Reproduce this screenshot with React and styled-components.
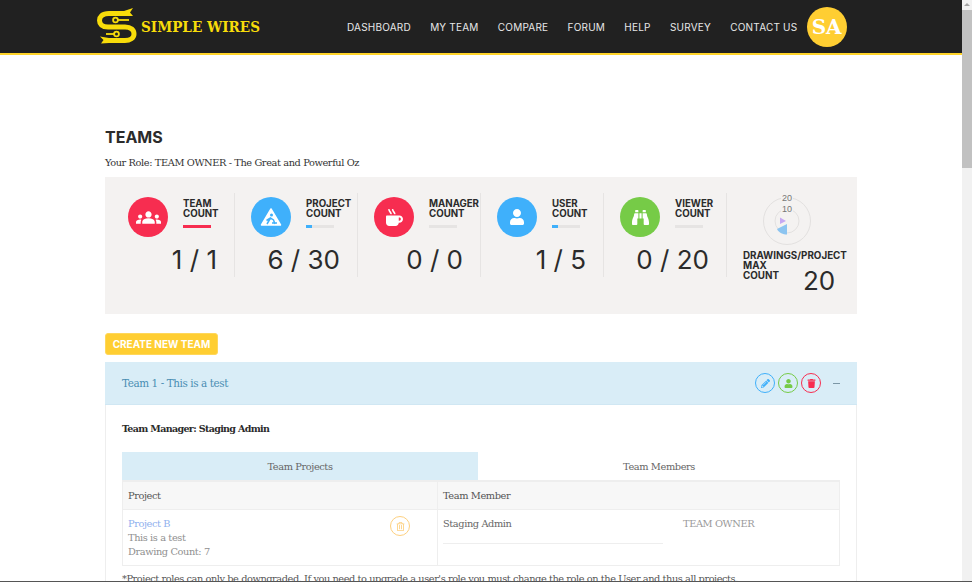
// App.jsx
import React from 'react';
import styled, { createGlobalStyle } from 'styled-components';
import { MdGroups } from 'react-icons/md';
import { FaMugHot, FaUser, FaBinoculars, FaPencilAlt, FaTrash, FaRegTrashAlt } from 'react-icons/fa';

const RED = '#f72d50';
const BLUE = '#3fb0fb';
const GREEN = '#76cb47';

const stats = [
  { label: 'TEAM', value: '1 / 1', color: RED, fill: 100, icon: <MdGroups size={25} /> },
  { label: 'PROJECT', value: '6 / 30', color: BLUE, fill: 20, icon: <DiggerSign /> },
  { label: 'MANAGER', value: '0 / 0', color: RED, fill: 0, icon: <FaMugHot size={17} /> },
  { label: 'USER', value: '1 / 5', color: BLUE, fill: 20, icon: <FaUser size={16} /> },
  { label: 'VIEWER', value: '0 / 20', color: GREEN, fill: 0, icon: <FaBinoculars size={17} /> },
];

const navItems = ['DASHBOARD', 'MY TEAM', 'COMPARE', 'FORUM', 'HELP', 'SURVEY', 'CONTACT US'];

function DiggerSign() {
  return (
    <svg width="22" height="20" viewBox="0 0 22 20">
      <path d="M11 2 L20.5 18 H1.5 Z" fill="#fff" stroke="#fff" strokeWidth="1.5" strokeLinejoin="round" />
      <circle cx="11.5" cy="8" r="1.5" fill={BLUE} />
      <path d="M7 17 L10.5 11 L13.5 13 L15 17 M10.5 11 L6.5 13.5 M12 16 h5" fill="none" stroke={BLUE} strokeWidth="1.5" />
    </svg>
  );
}

function Logo() {
  return (
    <svg width="40" height="37" viewBox="0 0 40 37">
      <g fill="none" stroke="#f8dc0a" strokeLinejoin="round">
        <path strokeWidth="5" d="M30 6.5 H12 C5 6.5 2.5 10 2.5 13.5 C2.5 17 5 20 11 20 H28 C34 20 37 23 37 27 C37 31 33 33.5 28 33.5 H10" />
        <path strokeWidth="1.8" d="M21 13 H32" />
        <path strokeWidth="1.8" d="M17 27 H9" />
        <circle cx="18.5" cy="13" r="2.4" strokeWidth="1.8" />
        <circle cx="19.5" cy="27" r="2.4" strokeWidth="1.8" />
      </g>
      <path d="M27 4 L36 1 L33 5.5 L36 9 L27 9 Z" fill="#f8dc0a" />
      <path d="M12 31 L3 29.5 L6.5 33 L4 36.5 L12 36 Z" fill="#f8dc0a" />
    </svg>
  );
}

function Radar() {
  return (
    <svg width="60" height="60" viewBox="0 0 60 60">
      <circle cx="30" cy="30" r="23.5" fill="none" stroke="#e3e1e0" strokeWidth="1" />
      <circle cx="30" cy="30" r="12" fill="none" stroke="#e3e1e0" strokeWidth="1" />
      <path d="M23 26.5 L29 30 L23 33 Z" fill="#c6a8f2" />
      <path d="M30 33 L20 38 C22 42 26 43.5 30 43.5 Z" fill="#8cc4f0" />
      <RadarTick x={30} y={7} value="20" />
      <RadarTick x={30} y={18} value="10" />
    </svg>
  );
}

function RadarTick({ x, y, value }) {
  return (
    <>
      <rect x={x - 6} y={y - 5} width="12" height="9.5" fill="#f4f2f1" />
      <text x={x} y={y + 3} textAnchor="middle" fontSize="9" letterSpacing="0" fontFamily="Liberation Sans, sans-serif" fill="#777">
        {value}
      </text>
    </>
  );
}

export default function App() {
  return (
    <>
      <GlobalStyle />
      <Viewport>
        <Page>
          <Header>
            <Brand>
              <Logo />
              <BrandName>SIMPLE WIRES</BrandName>
            </Brand>
            <Nav>
              {navItems.map((item) => (
                <NavLink key={item}>{item}</NavLink>
              ))}
              <Avatar>SA</Avatar>
            </Nav>
          </Header>
          <Main>
            <Title>TEAMS</Title>
            <Role>Your Role: TEAM OWNER - The Great and Powerful Oz</Role>
            <StatsPanel>
              {stats.map((s) => (
                <StatCell key={s.label}>
                  <StatTop>
                    <IconCircle $color={s.color}>{s.icon}</IconCircle>
                    <div>
                      <StatLabel>
                        {s.label}
                        <br />
                        COUNT
                      </StatLabel>
                      <Bar>
                        <BarFill $color={s.color} style={{ width: `${s.fill}%` }} />
                      </Bar>
                    </div>
                  </StatTop>
                  <StatValue>{s.value}</StatValue>
                </StatCell>
              ))}
              <LastCell>
                <RadarWrap>
                  <Radar />
                </RadarWrap>
                <LastRow>
                  <LastLabel>
                    DRAWINGS/PROJECT
                    <br />
                    MAX
                    <br />
                    COUNT
                  </LastLabel>
                  <LastValue>20</LastValue>
                </LastRow>
              </LastCell>
            </StatsPanel>
            <CreateButton>CREATE NEW TEAM</CreateButton>
            <Card>
              <CardHead>
                <CardTitle>Team 1 - This is a test</CardTitle>
                <CardActions>
                  <RoundButton $color={BLUE}>
                    <FaPencilAlt size={9} />
                  </RoundButton>
                  <RoundButton $color={GREEN}>
                    <FaUser size={9} />
                  </RoundButton>
                  <RoundButton $color={RED}>
                    <FaTrash size={9} />
                  </RoundButton>
                  <Collapse />
                </CardActions>
              </CardHead>
              <CardBody>
                <Manager>Team Manager: Staging Admin</Manager>
                <Tabs>
                  <Tab $active>Team Projects</Tab>
                  <Tab>Team Members</Tab>
                </Tabs>
                <Table>
                  <HeadCell>Project</HeadCell>
                  <HeadCell>Team Member</HeadCell>
                  <ProjectCell>
                    <ProjectInfo>
                      <ProjectLink>Project B</ProjectLink>
                      <Muted>This is a test</Muted>
                      <Muted>Drawing Count: 7</Muted>
                    </ProjectInfo>
                    <RoundButton $color="#fdb83c" $faint>
                      <FaRegTrashAlt size={9} />
                    </RoundButton>
                  </ProjectCell>
                  <MemberCell>
                    <MemberName>Staging Admin</MemberName>
                    <MemberRole>TEAM OWNER</MemberRole>
                  </MemberCell>
                </Table>
                <Note>*Project roles can only be downgraded. If you need to upgrade a user's role you must change the role on the User and thus all projects.</Note>
              </CardBody>
            </Card>
          </Main>
        </Page>
        <ScrollTrack>
          <ScrollArrow />
          <ScrollThumb />
        </ScrollTrack>
      </Viewport>
    </>
  );
}

const GlobalStyle = createGlobalStyle`
  html, body {
    margin: 0;
    height: 100%;
    overflow: hidden;
    background: #fff;
  }
  * { box-sizing: border-box; }
`;

const Viewport = styled.div`
  display: flex;
  width: 972px;
  height: 582px;
  overflow: hidden;
  border-bottom: 1px solid #555;
`;

const Page = styled.div`
  width: 962px;
  flex: none;
  overflow: hidden;
  font-family: 'DejaVu Serif', serif;
  font-size: 9.8px;
  color: #333;
`;

const ScrollTrack = styled.div`
  width: 10px;
  flex: none;
  background: #f1f1f1;
`;

const ScrollArrow = styled.div`
  width: 0;
  height: 0;
  margin: 3px auto 4px;
  border-left: 3px solid transparent;
  border-right: 3px solid transparent;
  border-bottom: 3px solid #a3a3a3;
`;

const ScrollThumb = styled.div`
  height: 158px;
  background: #c1c1c1;
`;

const Header = styled.header`
  height: 55px;
  background: #212121;
  border-bottom: 2px solid #ffd42a;
  display: flex;
  align-items: flex-start;
  padding: 7px 0 0 97px;
`;

const Brand = styled.div`
  display: flex;
  align-items: center;
  gap: 4px;
  height: 37px;
`;

const BrandName = styled.div`
  font-family: 'DejaVu Serif', serif;
  font-weight: 700;
  font-size: 15.5px;
  color: #f8dc0a;
  transform: scaleX(0.875);
  transform-origin: left center;
  white-space: nowrap;
  width: 200px;
  margin-top: 2px;
`;

const Nav = styled.nav`
  display: flex;
  align-items: center;
  gap: 19.3px;
  margin-left: 6px;
  height: 40px;
`;

const NavLink = styled.a`
  font-family: Inter, sans-serif;
  font-size: 10px;
  letter-spacing: 0.2px;
  color: #e8e8e8;
  white-space: nowrap;
`;

const Avatar = styled.div`
  width: 40px;
  height: 40px;
  margin-left: -10px;
  border-radius: 50%;
  background: #ffce32;
  color: #fff;
  display: flex;
  align-items: center;
  justify-content: center;
  font-family: 'DejaVu Serif', serif;
  font-weight: 700;
  font-size: 20px;
`;

const Main = styled.main`
  width: 752px;
  margin-left: 105px;
  padding-top: 72px;
  letter-spacing: -0.4px;
`;

const Title = styled.h1`
  margin: 0;
  font-family: Inter, sans-serif;
  font-weight: 700;
  font-size: 16px;
  line-height: 20px;
  letter-spacing: normal;
  color: #2b2b2b;
`;

const Role = styled.p`
  margin: 8px 0 0;
  line-height: 15px;
  color: #333;
`;

const StatsPanel = styled.section`
  display: flex;
  height: 137px;
  margin-top: 7px;
  padding: 16px 0 0 7px;
  background: #f4f2f1;
`;

const StatCell = styled.div`
  width: 123px;
  height: 84px;
  flex: none;
  padding: 4px 17px 0 16px;
  border-right: 1px solid #e6e4e3;
`;

const StatTop = styled.div`
  display: flex;
  gap: 15px;
`;

const IconCircle = styled.div`
  width: 40px;
  height: 40px;
  flex: none;
  border-radius: 50%;
  background: ${(p) => p.$color};
  color: #fff;
  display: flex;
  align-items: center;
  justify-content: center;
`;

const StatLabel = styled.div`
  margin-top: 2px;
  font-family: Inter, sans-serif;
  font-weight: 700;
  font-size: 9.7px;
  line-height: 10px;
  letter-spacing: normal;
  color: #2b2b2b;
  white-space: nowrap;
`;

const Bar = styled.div`
  width: 28px;
  height: 3px;
  margin-top: 6px;
  background: #e6e4e3;
`;

const BarFill = styled.div`
  height: 100%;
  background: ${(p) => p.$color};
`;

const StatValue = styled.div`
  margin-top: 8px;
  text-align: right;
  font-family: Inter, sans-serif;
  font-size: 26px;
  line-height: 30px;
  letter-spacing: normal;
  color: #2b2b2b;
  white-space: nowrap;
`;

const LastCell = styled.div`
  flex: 1;
  padding-left: 16px;
  min-width: 0;
`;

const RadarWrap = styled.div`
  margin: -2px 0 0 14px;
  height: 60px;
`;

const LastRow = styled.div`
  display: flex;
`;

const LastLabel = styled.div`
  font-family: Inter, sans-serif;
  font-weight: 700;
  font-size: 9.8px;
  line-height: 10px;
  letter-spacing: normal;
  color: #2b2b2b;
  white-space: nowrap;
  width: 60px;
`;

const LastValue = styled.div`
  margin-top: 16px;
  font-family: Inter, sans-serif;
  font-size: 26px;
  line-height: 28px;
  letter-spacing: normal;
  color: #2b2b2b;
`;

const CreateButton = styled.button`
  display: block;
  width: 113px;
  height: 22px;
  margin-top: 19px;
  padding: 0;
  border: 1px solid #ffd75a;
  border-radius: 3px;
  background: #ffce32;
  color: #fff;
  font-family: Inter, sans-serif;
  font-weight: 700;
  font-size: 10px;
`;

const Card = styled.section`
  margin-top: 7px;
  border-left: 1px solid #eee;
  border-right: 1px solid #eee;
`;

const CardHead = styled.div`
  height: 43px;
  margin: 0 -1px;
  padding: 0 17px;
  display: flex;
  align-items: center;
  justify-content: space-between;
  background: #d9edf7;
  border-bottom: 1px solid #d0e7f3;
`;

const CardTitle = styled.div`
  font-size: 10.4px;
  color: #4a8db3;
`;

const CardActions = styled.div`
  display: flex;
  align-items: center;
  gap: 3px;
`;

const RoundButton = styled.div`
  width: 20px;
  height: 20px;
  flex: none;
  border-radius: 50%;
  border: 1px solid ${(p) => p.$color};
  color: ${(p) => p.$color};
  opacity: ${(p) => (p.$faint ? 0.65 : 1)};
  display: flex;
  align-items: center;
  justify-content: center;
`;

const Collapse = styled.div`
  width: 7px;
  height: 1px;
  margin: 0 0 0 9px;
  background: #7c97a6;
`;

const CardBody = styled.div`
  padding: 0 16px;
`;

const Manager = styled.div`
  padding-top: 17px;
  font-size: 9.5px;
  font-weight: 700;
  line-height: 14px;
  letter-spacing: -0.65px;
  color: #2b2b2b;
`;

const Tabs = styled.div`
  display: grid;
  grid-template-columns: 356px 1fr;
  margin-top: 16px;
`;

const Tab = styled.div`
  height: 28px;
  display: flex;
  align-items: center;
  justify-content: center;
  color: #666;
  background: ${(p) => (p.$active ? '#d9edf7' : '#fff')};
`;

const Table = styled.div`
  display: grid;
  grid-template-columns: 315px 1fr;
  border: 1px solid #eee;
  border-top-width: 2px;
`;

const HeadCell = styled.div`
  height: 28px;
  padding: 0 5px;
  display: flex;
  align-items: center;
  color: #555;
  background: #f7f7f7;
  border-bottom: 1px solid #eee;
  &:first-child {
    border-right: 1px solid #eee;
  }
`;

const ProjectCell = styled.div`
  height: 55px;
  padding: 6px 27px 0 5px;
  display: flex;
  justify-content: space-between;
  border-right: 1px solid #eee;
`;

const ProjectInfo = styled.div`
  padding-top: 1px;
`;

const ProjectLink = styled.div`
  line-height: 14px;
  color: #8fb0ee;
`;

const Muted = styled.div`
  line-height: 14px;
  color: #8f8f8f;
`;

const MemberCell = styled.div`
  display: flex;
  padding: 7px 0 0 5px;
`;

const MemberName = styled.div`
  width: 220px;
  height: 27px;
  line-height: 14px;
  color: #666;
  border-bottom: 1px solid #eee;
`;

const MemberRole = styled.div`
  margin-left: 20px;
  line-height: 14px;
  color: #999;
`;

const Note = styled.p`
  margin: 6px 0 0;
  line-height: 14px;
  letter-spacing: -0.44px;
  color: #555;
  white-space: nowrap;
`;
